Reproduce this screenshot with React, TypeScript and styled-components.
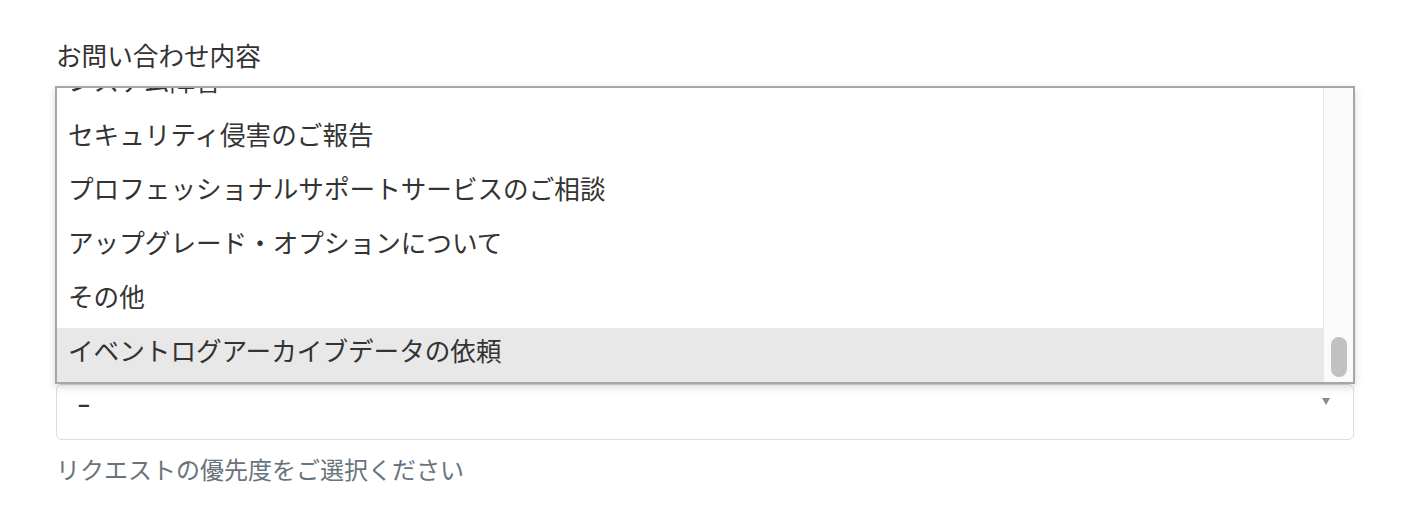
import React from "react";
import styled, { createGlobalStyle } from "styled-components";

const Global = createGlobalStyle`
  html, body { margin: 0; padding: 0; background: #ffffff; }
  body { font-family: "Noto Sans CJK JP", "Noto Sans", sans-serif; color: #333333; }
`;

const Form = styled.div`
  position: relative;
  padding: 38px 66px 0 56px;
`;

const Field = styled.div<{ $gap?: number }>`
  display: flex;
  flex-direction: column;
  margin-top: ${(p) => p.$gap ?? 0}px;
`;

const Label = styled.label`
  font-size: 25.6px;
  line-height: 34px;
  color: #333333;
  margin-bottom: 14px;
`;

const Select = styled.div`
  box-sizing: border-box;
  height: 56px;
  border: 1px solid #dcdcdc;
  border-radius: 6px;
  display: flex;
  align-items: center;
  justify-content: space-between;
  padding: 0 23px 22px 20px;
  font-size: 25.6px;
  color: #333333;
  background: #ffffff;
`;

const Value = styled.span`
  display: inline-block;
  transform: scaleX(1.5);
  transform-origin: left center;
  font-weight: 500;
`;

const Arrow = styled.span`
  width: 0;
  height: 0;
  border-left: 4px solid transparent;
  border-right: 4px solid transparent;
  border-top: 7px solid #8a8a8a;
`;

const Hint = styled.div`
  margin-top: 13px;
  font-size: 24px;
  line-height: 32px;
  color: #68737d;
`;

const Listbox = styled.div`
  position: absolute;
  left: 55px;
  top: 86px;
  width: 1300px;
  height: 298px;
  box-sizing: border-box;
  border: 2px solid #a6a6a6;
  background: #ffffff;
  box-shadow: 0 3px 8px rgba(0, 0, 0, 0.16);
  display: grid;
  grid-template-columns: 1fr 30px;
  z-index: 2;
`;

const Options = styled.div`
  display: flex;
  flex-direction: column;
  justify-content: flex-end;
  overflow: hidden;
`;

const Option = styled.div<{ $active?: boolean }>`
  flex: 0 0 54px;
  box-sizing: border-box;
  display: flex;
  align-items: center;
  padding: 0 0 11px 11px;
  font-size: 25.6px;
  color: #333333;
  white-space: nowrap;
  background: ${(p) => (p.$active ? "#e8e8e8" : "#ffffff")};
`;

const Track = styled.div`
  border-left: 1px solid #e8e8e8;
  background: #fafafa;
  display: flex;
  flex-direction: column;
  justify-content: flex-end;
  align-items: center;
  padding-bottom: 5px;
`;

const Thumb = styled.div`
  width: 16px;
  height: 40px;
  border-radius: 8px;
  background: #c1c1c1;
  margin-left: 1px;
`;

const options = [
  "システム障害",
  "セキュリティ侵害のご報告",
  "プロフェッショナルサポートサービスのご相談",
  "アップグレード・オプションについて",
  "その他",
  "イベントログアーカイブデータの依頼",
];

export default function App() {
  return (
    <>
      <Global />
      <Form>
        <Field>
          <Label>お問い合わせ内容</Label>
          <Select>
            <span />
            <Arrow />
          </Select>
        </Field>
        <Field $gap={242}>
          <Select>
            <Value>-</Value>
            <Arrow />
          </Select>
          <Hint>リクエストの優先度をご選択ください</Hint>
        </Field>
        <Listbox>
          <Options>
            {options.map((o, i) => (
              <Option key={o} $active={i === options.length - 1}>
                {o}
              </Option>
            ))}
          </Options>
          <Track>
            <Thumb />
          </Track>
        </Listbox>
      </Form>
    </>
  );
}
